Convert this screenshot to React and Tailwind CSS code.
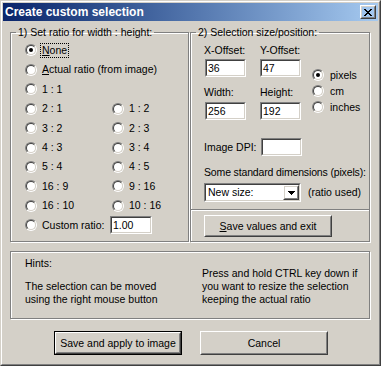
import React from "react";

const FONT = "font-['Liberation_Sans',Arial,sans-serif]";
const ETCH = "border border-[#808080] shadow-[1px_1px_0_#ffffff,inset_1px_1px_0_#ffffff]";
const SUNKEN_OUT = "border border-t-[#808080] border-l-[#808080] border-b-white border-r-white";
const SUNKEN_IN = "border border-t-[#404040] border-l-[#404040] border-b-[#d4d0c8] border-r-[#d4d0c8]";

const Radio = ({ checked }) => (
  <span className="flex h-[12px] w-[12px] shrink-0 rounded-full border border-t-[#808080] border-l-[#808080] border-b-white border-r-white">
    <span className="flex h-full w-full items-center justify-center rounded-full border border-t-[#404040] border-l-[#404040] border-b-[#d4d0c8] border-r-[#d4d0c8] bg-white">
      {checked && <span className="h-[4px] w-[4px] rounded-full bg-black" />}
    </span>
  </span>
);

const Field = ({ value, className = "" }) => (
  <div className={`${SUNKEN_OUT} ${className}`}>
    <div className={`${SUNKEN_IN} flex h-full w-full items-center bg-white pl-[1px]`}>{value}</div>
  </div>
);

const Btn = ({ children, def, className = "" }) => (
  <div className={`${def ? "border border-black" : ""} ${className}`}>
    <div className="h-full border border-t-white border-l-white border-b-[#404040] border-r-[#404040]">
      <div className="flex h-full items-center justify-center border border-t-[#d4d0c8] border-l-[#d4d0c8] border-b-[#808080] border-r-[#808080]">
        {children}
      </div>
    </div>
  </div>
);

// 8x7 close glyph
const closeRows = ["11000011", "01100110", "00111100", "00011000", "00111100", "01100110", "11000011"];
const CloseGlyph = () => (
  <svg width="8" height="7" viewBox="0 0 8 7" shapeRendering="crispEdges">
    {closeRows.map((r, y) =>
      r.split("").map((c, x) => (c === "1" ? <rect key={`${x}-${y}`} x={x} y={y} width="1" height="1" fill="#000" /> : null))
    )}
  </svg>
);

const Arrow = () => (
  <svg width="7" height="4" viewBox="0 0 7 4" shapeRendering="crispEdges">
    <rect x="0" y="0" width="7" height="1" fill="#000" />
    <rect x="1" y="1" width="5" height="1" fill="#000" />
    <rect x="2" y="2" width="3" height="1" fill="#000" />
    <rect x="3" y="3" width="1" height="1" fill="#000" />
  </svg>
);

const Opt = ({ label, checked }) => (
  <div className="flex items-center">
    <Radio checked={checked} />
    <span className="ml-[5px] whitespace-nowrap">{label}</span>
  </div>
);

const pairs = [
  ["2 : 1", "1 : 2", "h-[19px]"],
  ["3 : 2", "2 : 3", "h-[20px]"],
  ["4 : 3", "3 : 4", "h-[19px]"],
  ["5 : 4", "4 : 5", "h-[19px]"],
  ["16 : 9", "9 : 16", "h-[20px]"],
  ["16 : 10", "10 : 16", "h-[19px]"],
];

export default function App() {
  return (
    <div className={`h-[366px] w-[381px] bg-[#d4d0c8] text-[10.5px] leading-[13px] text-black ${FONT} border border-t-[#d4d0c8] border-l-[#d4d0c8] border-b-[#404040] border-r-[#404040]`}>
      <div className="flex h-full flex-col border border-t-white border-l-white border-b-[#808080] border-r-[#808080] p-[1px]">
        {/* title bar */}
        <div className="flex h-[18px] shrink-0 items-center justify-between bg-linear-to-r from-[#0a246a] to-[#a6caf0] pl-[2px] pr-[2px]">
          <span className="text-[12px] font-bold leading-[18px] text-white">Create custom selection</span>
          <Btn className="h-[14px] w-[16px]">
            <CloseGlyph />
          </Btn>
        </div>

        <div className="flex pl-[7px] pt-[5px]">
          {/* group 1 */}
          <fieldset className={`h-[216px] w-[179px] ${ETCH}`}>
            <legend className="ml-[5px] px-[2px] leading-[13px]">1) Set ratio for width : height:</legend>
            <div className="flex flex-col pl-[14px] pt-[1px]">
              <div className="flex h-[20px] items-center">
                <Radio checked />
                <span className="ml-[3px] border border-dotted border-black px-[1px] leading-[13px]">
                  <u>N</u>one
                </span>
              </div>
              <div className="flex h-[19px] items-center">
                <Opt label={<><u>A</u>ctual ratio (from image)</>} />
              </div>
              <div className="flex h-[20px] items-center">
                <Opt label="1 : 1" />
              </div>
              {pairs.map(([a, b, h]) => (
                <div key={a} className={`grid grid-cols-[87px_1fr] items-center ${h}`}>
                  <Opt label={a} />
                  <Opt label={b} />
                </div>
              ))}
              <div className="flex h-[20px] items-center">
                <Radio />
                <span className="ml-[5px] w-[68px] shrink-0 whitespace-nowrap">Custom ratio:</span>
                <Field value="1.00" className="h-[18px] w-[42px]" />
              </div>
            </div>
          </fieldset>

          {/* group 2 */}
          <fieldset className={`ml-[1px] h-[216px] w-[180px] ${ETCH}`}>
            <legend className="ml-[5px] px-[2px] leading-[13px]">2) Selection size/position:</legend>
            <div className="flex flex-col">
              <div className="flex pl-[13px] pt-[5px]">
                <div className="flex w-[56px] flex-col whitespace-nowrap">
                  <span>X-Offset:</span>
                  <Field value="36" className="ml-[1px] mt-[2px] h-[18px] w-[41px]" />
                  <span className="mt-[9px]">Width:</span>
                  <Field value="256" className="ml-[1px] mt-[3px] h-[18px] w-[41px]" />
                </div>
                <div className="flex w-[41px] flex-col whitespace-nowrap">
                  <span>Y-Offset:</span>
                  <Field value="47" className="mt-[2px] h-[18px] w-[41px]" />
                  <span className="mt-[9px]">Height:</span>
                  <Field value="192" className="mt-[3px] h-[18px] w-[41px]" />
                </div>
                <div className="ml-[11px] mt-[23px] flex flex-col">
                  {[["pixels", true], ["cm"], ["inches"]].map(([l, c]) => (
                    <div key={l} className="flex h-[16px] items-center">
                      <Radio checked={c} />
                      <span className="ml-[6px]">{l}</span>
                    </div>
                  ))}
                </div>
              </div>

              <div className="mt-[18px] flex items-center pl-[13px]">
                <span className="w-[57px] whitespace-nowrap">Image DPI:</span>
                <Field value="" className="h-[18px] w-[41px]" />
              </div>
              <div className="mt-[10px] whitespace-nowrap pl-[13px] tracking-[-0.15px]">Some standard dimensions (pixels):</div>
              <div className="mt-[4px] flex items-center pl-[13px]">
                <div className={`${SUNKEN_OUT} h-[19px] w-[97px]`}>
                  <div className={`${SUNKEN_IN} flex h-full w-full items-center bg-white`}>
                    <span className="flex-1 pl-[2px]">New size:</span>
                    <Btn className="h-full w-[16px]">
                      <Arrow />
                    </Btn>
                  </div>
                </div>
                <span className="ml-[7px] whitespace-nowrap">(ratio used)</span>
              </div>

              <div className="mt-[7px] h-[2px] border-t border-b border-t-[#808080] border-b-white" />

              <div className="mt-[4px] pl-[13px]">
                <Btn className="h-[22px] w-[128px]">
                  <span>
                    <u>S</u>ave values and exit
                  </span>
                </Btn>
              </div>
            </div>
          </fieldset>
        </div>

        {/* hints */}
        <div className={`ml-[7px] mt-[9px] grid h-[68px] w-[360px] grid-cols-[177px_1fr] pl-[14px] pt-[5px] ${ETCH}`}>
          <div className="flex flex-col">
            <span>Hints:</span>
            <span className="mt-[10px]">The selection can be moved</span>
            <span>using the right mouse button</span>
          </div>
          <div className="flex flex-col pt-[10px]">
            <span>Press and hold CTRL key down if</span>
            <span>you want to resize the selection</span>
            <span>keeping the actual ratio</span>
          </div>
        </div>

        {/* buttons */}
        <div className="mt-[12px] flex gap-[18px] pl-[51px]">
          <Btn def className="h-[24px] w-[128px]">
            Save and apply to image
          </Btn>
          <Btn className="h-[24px] w-[128px]">Cancel</Btn>
        </div>
      </div>
    </div>
  );
}
